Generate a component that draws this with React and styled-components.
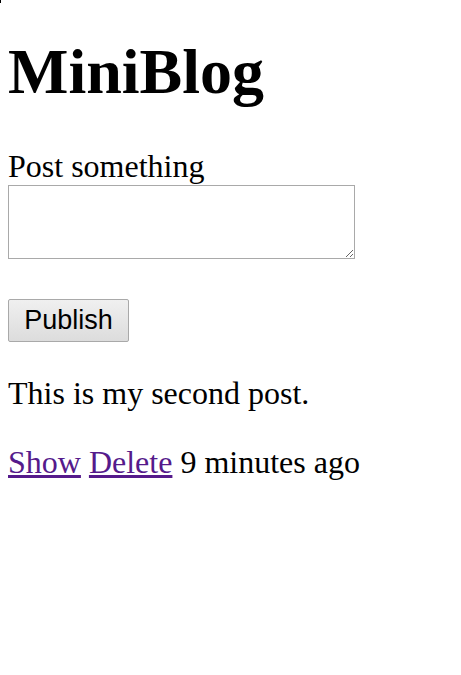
import React from "react";
import styled, { createGlobalStyle } from "styled-components";

const Global = createGlobalStyle`
  html, body { background: #fff; }
  body {
    margin: 8px;
    font-family: "Liberation Serif", "Times New Roman", serif;
    font-size: 32px;
    color: #000;
  }
`;

const Caret = styled.div`
  position: absolute;
  left: 0;
  top: 0;
  width: 1px;
  height: 3px;
  background: #000;
`;

const Title = styled.h1`
  font-size: 64px;
  font-weight: bold;
  margin: 27px 0 39px;
`;

const Form = styled.form`
  margin: 0 0 33px;
`;

const Label = styled.label`
  display: block;
`;

const TextArea = styled.textarea`
  display: block;
  box-sizing: border-box;
  width: 347px;
  height: 74px;
  margin: 0 0 40px;
  border: 1px solid #a9a9a9;
  font-family: "Liberation Mono", monospace;
  font-size: 23px;
  resize: both;
`;

const Button = styled.button`
  display: block;
  box-sizing: border-box;
  width: 121px;
  height: 43px;
  padding: 0;
  border: 1px solid #a9a9a9;
  border-radius: 2px;
  background: linear-gradient(#f0f0f0, #dcdcdc);
  font-family: "Liberation Sans", Arial, sans-serif;
  font-size: 27px;
  color: #000;
`;

const Post = styled.p`
  margin: 0 0 32px;
`;

const Meta = styled.p`
  margin: 0;
`;

const Link = styled.a`
  color: #551a8b;
  text-decoration: underline;
`;

export default function App() {
  return (
    <>
      <Global />
      <Caret />
      <Title>MiniBlog</Title>
      <Form onSubmit={(e) => e.preventDefault()}>
        <Label htmlFor="post">Post something</Label>
        <TextArea id="post" />
        <Button type="submit">Publish</Button>
      </Form>
      <Post>This is my second post.</Post>
      <Meta>
        <Link href="#show">Show</Link> <Link href="#delete">Delete</Link> 9 minutes ago
      </Meta>
    </>
  );
}
